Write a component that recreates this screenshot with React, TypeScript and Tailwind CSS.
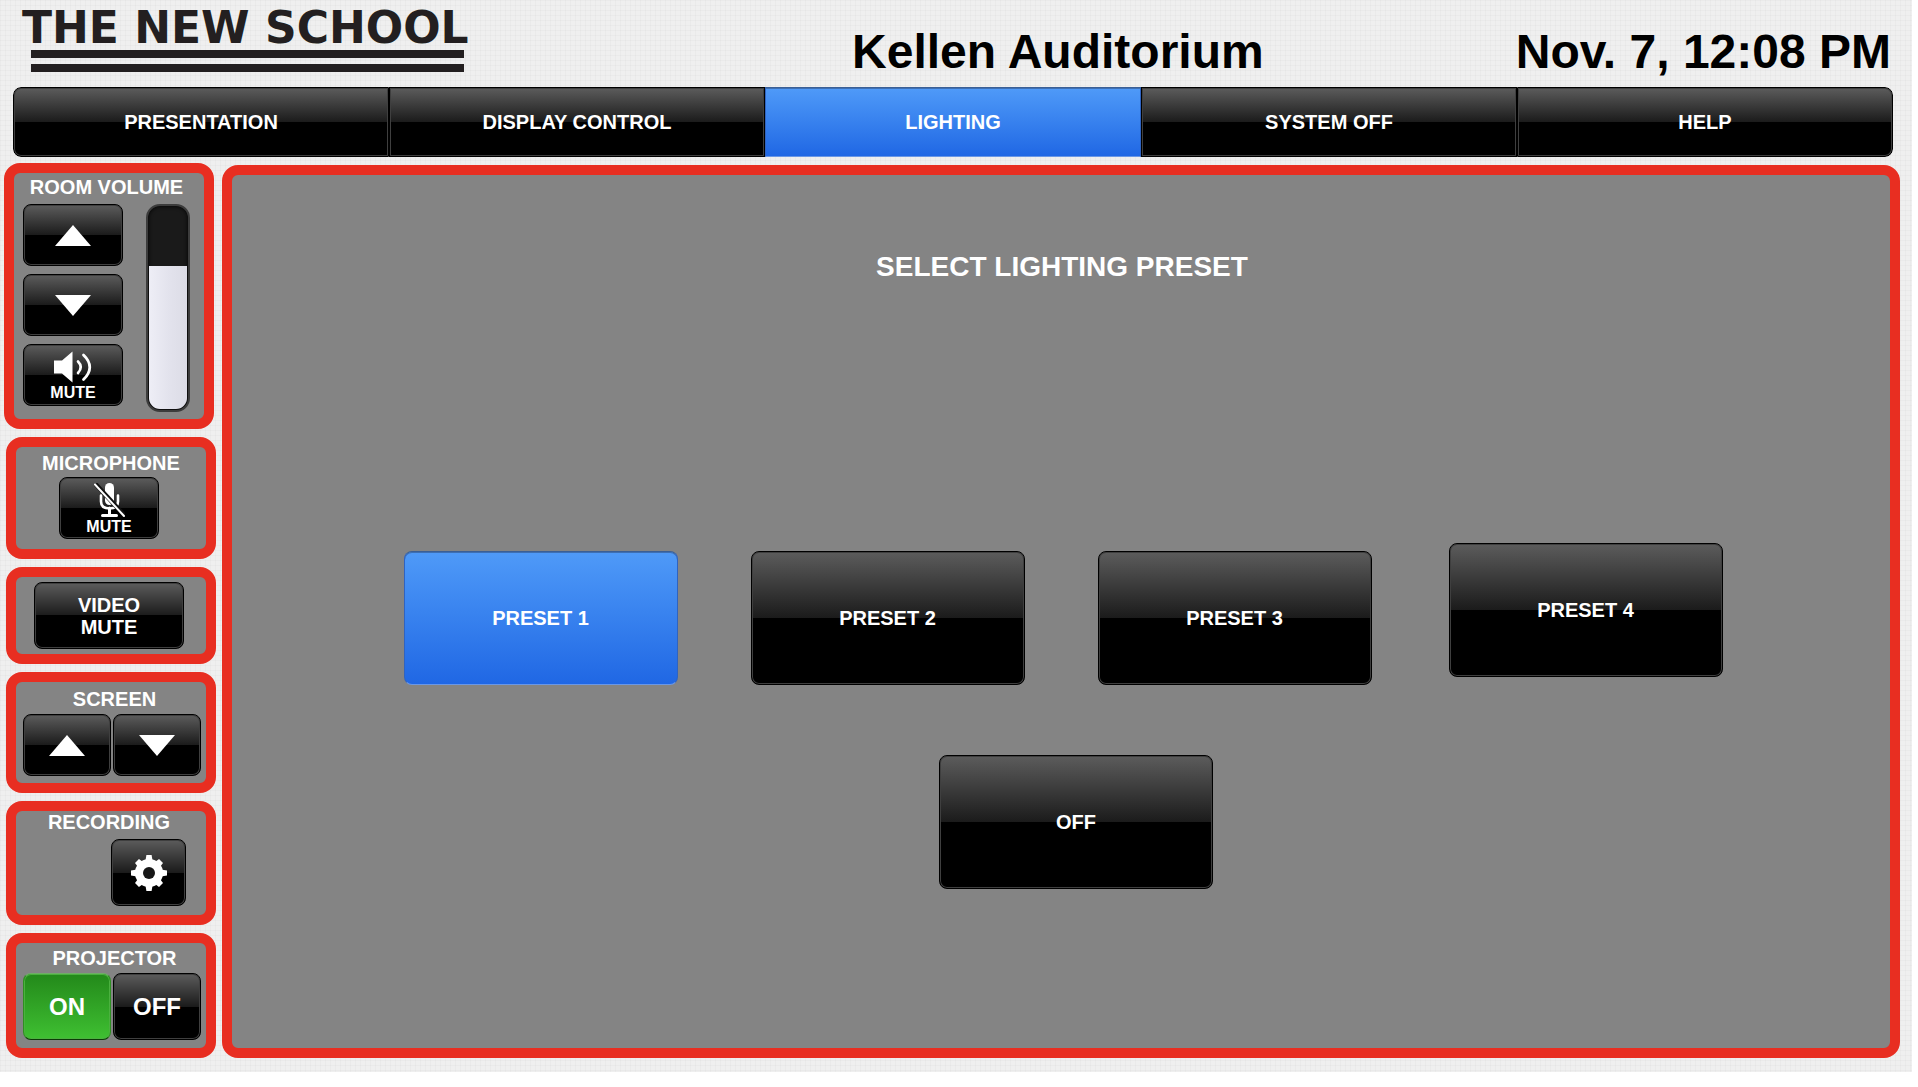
import { useState, type ReactNode } from "react";

const GLOSS =
  "border border-black bg-[linear-gradient(to_bottom,#5c5c5c_0%,#1b1b1b_50%,#000_50%,#000_100%)] shadow-[inset_0_0_0_1px_#3f3f3f]";
const BLUE =
  "border border-t-[#3a5f96] border-x-[#2f63c0] border-b-[#6a97e6] bg-linear-to-b from-[#4f9af8] to-[#2067e4] shadow-[inset_0_1px_0_#3d6fb4]";
const GREEN =
  "border border-t-[#6fae66] border-x-[#2f8f22] border-b-[#0d3a08] bg-linear-to-b from-[#23891a] to-[#3fc032] shadow-[inset_0_0_0_1px_#4bb13f]";

type KeyProps = {
  children: ReactNode;
  tone?: string;
  size: string;
  label?: string;
  pressed?: boolean;
  onClick?: () => void;
};

function Key({ children, tone = GLOSS, size, label, pressed, onClick }: KeyProps) {
  return (
    <button
      type="button"
      aria-label={label}
      aria-pressed={pressed}
      onClick={onClick}
      className={`flex shrink-0 flex-col items-center justify-center rounded-lg font-bold text-white ${tone} ${size}`}
    >
      {children}
    </button>
  );
}

function Panel({ title, size, head = "", children }: { title?: string; size: string; head?: string; children: ReactNode }) {
  return (
    <section className={`w-[210px] rounded-2xl border-10 border-[#e82e21] bg-[#848484] ${size}`}>
      {title && <h2 className={`text-center text-xl leading-5 font-bold whitespace-nowrap text-white ${head}`}>{title}</h2>}
      {children}
    </section>
  );
}

function Up() {
  return (
    <svg viewBox="0 0 36 21" className="h-[21px] w-9" fill="#fff" aria-hidden="true">
      <path d="M18 0 36 21H0Z" />
    </svg>
  );
}

function Down() {
  return (
    <svg viewBox="0 0 36 21" className="h-[21px] w-9" fill="#fff" aria-hidden="true">
      <path d="M0 0H36L18 21Z" />
    </svg>
  );
}

function Speaker() {
  return (
    <svg viewBox="0 0 38 32" className="h-8 w-[38px]" aria-hidden="true">
      <path d="M0 9.5H8L18.5 .5V31.500L8 22.500H0Z" fill="#fff" />
      <path d="M24 10.500Q29.500 16 24 22" fill="none" stroke="#fff" strokeWidth="2.600" strokeLinecap="round" />
      <path d="M29.500 4Q42 16 29.500 28.500" fill="none" stroke="#fff" strokeWidth="2.800" strokeLinecap="round" />
    </svg>
  );
}

function MicOff() {
  return (
    <svg viewBox="0 0 32 36" className="h-9 w-8" aria-hidden="true">
      <rect x="12" y="0" width="9" height="22" rx="4.500" fill="#fff" />
      <path d="M8 12.500V18.500Q8 25.500 16.500 25.500T25 18.500V12.500" fill="none" stroke="#fff" strokeWidth="2.600" strokeLinecap="round" />
      <path d="M16.500 25V32M9.500 32.500H23.500" stroke="#fff" strokeWidth="3" strokeLinecap="round" fill="none" />
      <path d="M2.500 1 31.500 32.500" stroke="#111" strokeWidth="4.500" />
      <path d="M2 1.500 31 33" stroke="#fff" strokeWidth="2" strokeLinecap="round" />
    </svg>
  );
}

function Gear() {
  return (
    <svg viewBox="-18 -18 36 36" className="size-9" aria-hidden="true">
      {[0, 45, 90, 135].map((a) => (
        <path key={a} d={a % 90 ? "M-2.800 -17H2.800L3.600 -12V12L2.800 17H-2.800L-3.600 12V-12Z" : "M-2.600 -18H2.600L3.600 -12V12L2.600 18H-2.600L-3.600 12V-12Z"} fill="#fff" transform={`rotate(${a})`} />
      ))}
      <circle r="14" fill="#fff" />
      <circle r="6" fill="#161616" />
    </svg>
  );
}

function Logo() {
  return (
    <div className="flex w-[444px] shrink-0 flex-col pt-1.5 text-[#231f20]">
      <span className="font-['DejaVu_Sans',sans-serif] text-[44px] leading-[44px] font-bold whitespace-nowrap">THE NEW SCHOOL</span>
      <span className="mr-0.5 ml-[9px] h-[22px] border-y-8 border-[#231f20]" />
    </div>
  );
}

const TABS = ["PRESENTATION", "DISPLAY CONTROL", "LIGHTING", "SYSTEM OFF", "HELP"];
const PRESETS = ["PRESET 1", "PRESET 2", "PRESET 3", "PRESET 4"];

export default function App() {
  const [tab, setTab] = useState("LIGHTING");
  const [preset, setPreset] = useState("PRESET 1");
  const [projector, setProjector] = useState("ON");
  const [volume, setVolume] = useState(71);

  return (
    <div className="mr-1.5 bg-[#efefef] bg-[linear-gradient(to_right,#00000005_1px,transparent_1px),linear-gradient(to_bottom,#00000005_1px,transparent_1px)] bg-size-[5px_5px] pb-3.5 font-['Liberation_Sans',Arial,sans-serif]">
      <header className="flex h-[87px] items-start pr-[21px] pl-[22px] text-5xl leading-[48px] font-bold text-black">
        <Logo />
        <h1 className="flex-1 pt-7 pl-[134px] text-center whitespace-nowrap">Kellen Auditorium</h1>
        <time className="shrink-0 pt-7 whitespace-nowrap">Nov. 7, 12:08 PM</time>
      </header>

      <nav className="mr-[19px] ml-[13px] grid h-[70px] grid-cols-5 overflow-hidden rounded-lg">
        {TABS.map((t) => (
          <button
            key={t}
            type="button"
            aria-current={t === tab ? "page" : undefined}
            onClick={() => setTab(t)}
            className={`text-xl font-bold text-white first:rounded-l-lg last:rounded-r-lg ${t === tab ? BLUE : GLOSS}`}
          >
            {t}
          </button>
        ))}
      </nav>

      <div className="mt-1.5 flex gap-1.5 pr-3 pl-1">
        <aside className="flex flex-col gap-2">
          <Panel title="ROOM VOLUME" size="h-[266px]" head="pt-1 pr-[5px]">
            <div className="flex items-start gap-[23px] pt-[7px] pl-[9px]">
              <div className="flex flex-col gap-2">
                <Key size="h-[62px] w-[100px]" label="Volume up" onClick={() => setVolume((v) => Math.min(100, v + 5))}>
                  <Up />
                </Key>
                <Key size="h-[62px] w-[100px]" label="Volume down" onClick={() => setVolume((v) => Math.max(0, v - 5))}>
                  <Down />
                </Key>
                <Key size="h-[62px] w-[100px] pt-0.5 text-base leading-4">
                  <Speaker />
                  <span className="pt-0.5">MUTE</span>
                </Key>
              </div>
              <div className="relative flex h-[208px] w-11 flex-col justify-end overflow-hidden rounded-[14px] border-2 border-[#3c3c3c] bg-[#1a1a1a] p-px shadow-[inset_0_0_4px_#000]">
                <div
                  className="rounded-b-[11px] bg-linear-to-r from-[#eeeef6] via-[#e3e3ed] to-[#dcdce6]"
                  style={{ height: `${volume}%` }}
                />
                <input
                  type="range"
                  aria-label="Room volume"
                  value={volume}
                  onChange={(e) => setVolume(Number(e.target.value))}
                  className="absolute inset-0 h-full w-full cursor-pointer opacity-0 [direction:rtl] [writing-mode:vertical-lr]"
                />
              </div>
            </div>
          </Panel>

          <div className="flex flex-col gap-2 pl-0.5">
            <Panel title="MICROPHONE" size="h-[122px]" head="pt-1.5">
              <div className="flex justify-center pt-1 pr-1">
                <Key size="h-[62px] w-[100px] pt-0.5 text-base leading-4">
                  <MicOff />
                  <span>MUTE</span>
                </Key>
              </div>
            </Panel>

            <Panel size="h-[97px]">
              <div className="flex justify-center pt-[5px] pr-1">
                <Key size="h-[67px] w-[150px] text-xl leading-[22px]">
                  <span>VIDEO</span>
                  <span>MUTE</span>
                </Key>
              </div>
            </Panel>

            <Panel title="SCREEN" size="h-[121px]" head="pt-[7px] pl-[7px]">
              <div className="flex gap-0.5 pt-[5px] pl-[7px]">
                <Key size="h-[62px] w-[88px]" label="Screen up">
                  <Up />
                </Key>
                <Key size="h-[62px] w-[88px]" label="Screen down">
                  <Down />
                </Key>
              </div>
            </Panel>

            <Panel title="RECORDING" size="h-[124px]" head="pt-px pr-1">
              <div className="flex justify-end pt-[7px] pr-5">
                <Key size="h-[67px] w-[75px]" label="Recording settings">
                  <Gear />
                </Key>
              </div>
            </Panel>

            <Panel title="PROJECTOR" size="h-[125px]" head="pt-[5px] pl-[7px]">
              <div className="flex gap-0.5 pt-[5px] pl-[7px]">
                {["ON", "OFF"].map((s) => (
                  <Key
                    key={s}
                    size="h-[67px] w-[88px] text-2xl"
                    tone={s !== projector ? GLOSS : GREEN}
                    pressed={s === projector}
                    onClick={() => setProjector(s)}
                  >
                    {s}
                  </Key>
                ))}
              </div>
            </Panel>
          </div>
        </aside>

        <main className="mt-0.5 flex flex-1 flex-col items-center rounded-2xl border-10 border-[#e82e21] bg-[#848484]">
          <h2 className="pt-[76px] pl-0.5 text-[28px] leading-8 font-bold text-white">SELECT LIGHTING PRESET</h2>
          <div className="flex gap-[73px] pt-[260px] pl-1">
            {PRESETS.map((p) => (
              <div key={p} className="pt-2 last:pt-0 last:pl-1">
                <Key
                  size="h-[134px] w-[274px] text-xl"
                  tone={p === preset ? BLUE : GLOSS}
                  pressed={p === preset}
                  onClick={() => setPreset(p)}
                >
                  {p}
                </Key>
              </div>
            ))}
          </div>
          <div className="pt-[70px] pl-[30px]">
            <Key size="h-[134px] w-[274px] text-xl" tone={preset === "OFF" ? BLUE : GLOSS} pressed={preset === "OFF"} onClick={() => setPreset("OFF")}>
              OFF
            </Key>
          </div>
        </main>
      </div>
    </div>
  );
}
